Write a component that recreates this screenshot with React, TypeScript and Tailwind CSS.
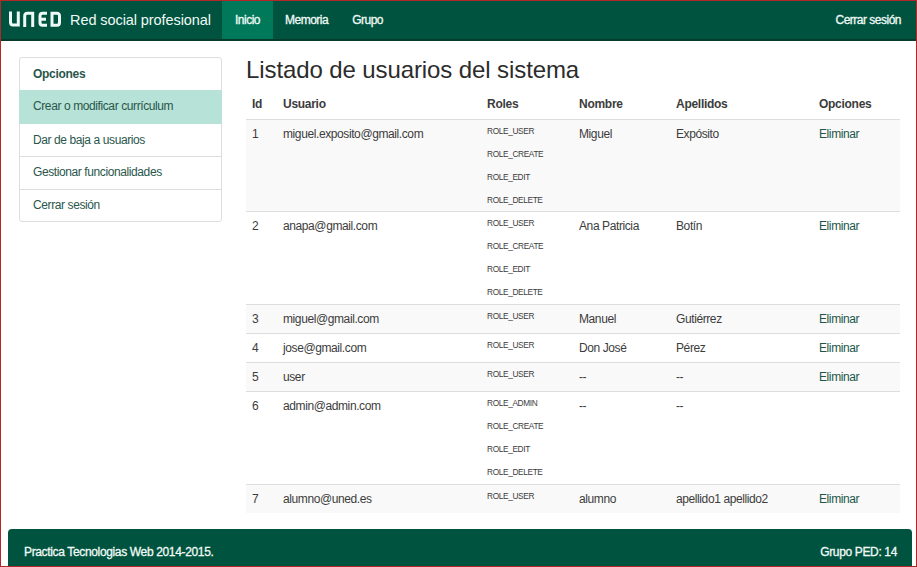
type Row = { id: number; user: string; roles: string[]; name: string; last: string; remove: boolean; height: string };

const all = ["ROLE_CREATE", "ROLE_EDIT", "ROLE_DELETE"];
const rows: Row[] = [
  { id: 1, user: "miguel.exposito@gmail.com", roles: ["ROLE_USER", ...all], name: "Miguel", last: "Expósito", remove: true, height: "h-[92px]" },
  { id: 2, user: "anapa@gmail.com", roles: ["ROLE_USER", ...all], name: "Ana Patricia", last: "Botín", remove: true, height: "h-[93px]" },
  { id: 3, user: "miguel@gmail.com", roles: ["ROLE_USER"], name: "Manuel", last: "Gutiérrez", remove: true, height: "h-[29px]" },
  { id: 4, user: "jose@gmail.com", roles: ["ROLE_USER"], name: "Don José", last: "Pérez", remove: true, height: "h-[29px]" },
  { id: 5, user: "user", roles: ["ROLE_USER"], name: "--", last: "--", remove: true, height: "h-[29px]" },
  { id: 6, user: "admin@admin.com", roles: ["ROLE_ADMIN", ...all], name: "--", last: "--", remove: false, height: "h-[93px]" },
  { id: 7, user: "alumno@uned.es", roles: ["ROLE_USER"], name: "alumno", last: "apellido1 apellido2", remove: true, height: "h-[29px]" },
];

const columns = "grid grid-cols-[31px_204px_92px_97px_143px_87px] *:pl-[6px]";

function Logo() {
  return (
    <svg width="54" height="17" viewBox="0 0 54 17" fill="none" stroke="#eefaf5" strokeWidth="3" className="mt-[-1px] block" aria-label="UNED">
      <path d="M2.5 0.5V11Q2.5 14 5 14H10.3V0.5" />
      <path d="M16.7 16V5Q16.7 2.2 19.2 2.2H24.7V16" />
      <path d="M39 2.2H34.5Q32 2.2 32 5V11.5Q32 14.3 34.5 14.3H39M32 8.3H38" />
      <path d="M44 1V14.3H49Q51.5 14.3 51.5 11.5V5Q51.5 2.2 49 2.2H42.5" />
    </svg>
  );
}

export default function App() {
  return (
    <div className="relative h-[567px] w-[917px] overflow-hidden bg-white font-['Liberation_Sans',Arial,sans-serif] text-[12px] leading-[17px] tracking-[-0.4px] text-[#3c3c3c]">
      <header className="flex h-[41px] items-stretch border-b-2 border-[#073c2c] bg-[#00533e] text-[#f0faf6]">
        <div className="flex w-[222px] items-center gap-[8px] pl-[8px]">
          <Logo />
          <span className="mt-px whitespace-nowrap text-[14.5px] tracking-[-0.08px]">Red social profesional</span>
        </div>
        <nav className="flex flex-1 tracking-[-0.5px] *:pt-px [-webkit-text-stroke:0.3px]">
          <a className="flex w-[51px] items-center justify-center bg-[#00785a]">Inicio</a>
          <a className="flex items-center pl-[12px]">Memoria</a>
          <a className="flex items-center pl-[24px]">Grupo</a>
          <a className="ml-auto flex items-center pr-[16px]">Cerrar sesión</a>
        </nav>
      </header>

      <div className="flex h-[488px]">
        <aside className="ml-[19px] mt-[16px] h-[165px] w-[203px] shrink-0 rounded-[3px] border border-[#ddd] text-[#29564b]">
          <div className="h-[32px] pl-[13px] pt-[8px] font-bold tracking-[-0.3px]">Opciones</div>
          <div className="-mx-px h-[34px] bg-[#b7e2d7] pl-[14px] pt-[8px]">Crear o modificar currículum</div>
          <div className="h-[33px] border-b border-[#ddd] pl-[13px] pt-[8px]">Dar de baja a usuarios</div>
          <div className="h-[33px] border-b border-[#ddd] pl-[13px] pt-[7px]">Gestionar funcionalidades</div>
          <div className="pl-[13px] pt-[7px]">Cerrar sesión</div>
        </aside>
        <main className="ml-[24px] w-[654px]">
          <h1 className="mt-[14px] h-[35px] whitespace-nowrap text-[24px] leading-[29px] tracking-[-0.1px] text-[#2c2c2c]">Listado de usuarios del sistema</h1>
          <div className={columns + " h-[29px] pt-[6px] font-bold tracking-[-0.28px]"}>
            <span>Id</span><span>Usuario</span><span>Roles</span><span>Nombre</span><span>Apellidos</span><span>Opciones</span>
          </div>
          {rows.map((r) => (
            <div key={r.id} className={`${columns} ${r.height} border-t border-[#ddd] pt-[6px] odd:bg-[#f9f9f9] even:bg-white`}>
              <span>{r.id}</span>
              <span>{r.user}</span>
              <div className="-mt-[6px] text-[8.3px] leading-[23px] tracking-[-0.36px]">
                {r.roles.map((role) => <div key={role}>{role}</div>)}
              </div>
              <span>{r.name}</span>
              <span>{r.last}</span>
              <a className="text-[#1d5548]">{r.remove ? "Eliminar" : ""}</a>
            </div>
          ))}
        </main>
      </div>

      <footer className="ml-[8px] mr-[5px] flex h-[38px] justify-between rounded-t-[4px] bg-[#00533e] pl-[16px] pr-[15px] pt-[15px] tracking-[-0.35px] text-[#f0faf6] [-webkit-text-stroke:0.3px]">
        <span>Practica Tecnologias Web 2014-2015.</span>
        <span>Grupo PED: 14</span>
      </footer>
      <div className="pointer-events-none absolute inset-0 border border-[#b3272b]" />
    </div>
  );
}
